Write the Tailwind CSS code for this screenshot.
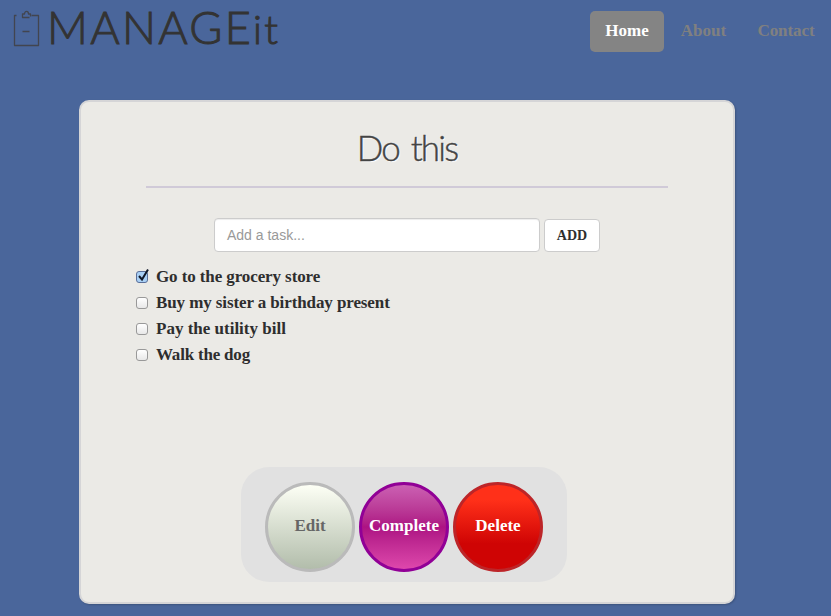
<!DOCTYPE html>
<html lang="en">
<head>
<meta charset="utf-8">
<title>MANAGEit</title>
<script src="https://cdn.jsdelivr.net/npm/@tailwindcss/browser@4"></script>
</head>
<body class="h-[616px] overflow-hidden bg-[#4a669b] font-['Liberation_Serif',serif] font-bold text-[#2e2e2e]">
<header class="flex h-[100px] items-start justify-between pl-[13px] pr-[2px]">
  <a class="flex text-[#333333]">
    <svg class="mt-[10px] h-[37px] w-[30px] shrink-0" viewBox="0 0 30 37" fill="none" stroke="#42454f" stroke-width="1.3" stroke-linejoin="round"><path d="M3.500 5.500H1.500V35.500H25.500V5.500H18.500"/><path d="M16.500 7.500H9.500V4H11.500C11.500 .6 15.500 .6 15.500 4H17.500V6.500M9.500 21.500H16.500"/></svg>
    <span class="ml-[4px] whitespace-nowrap font-['Lato',sans-serif] text-[45px] font-light leading-[54px] tracking-[2.3px] [-webkit-text-stroke:1px_#333]">MANAGE<span class="text-[40px]">it</span></span>
  </a>
  <nav class="mt-[11px] flex gap-[2px] text-[17px] leading-[40px] text-[#808080]">
    <a class="h-[41px] w-[74px] rounded-[5px] bg-[#848484] text-center text-white">Home</a>
    <a class="w-[75px] text-center">About</a>
    <a class="w-[86px] text-center tracking-[-0.1px]">Contact</a>
  </nav>
</header>
<main class="ml-[79px] h-[504px] w-[656px] rounded-[10px] border-2 border-[#d5d5d7] bg-[#ebeae6] shadow-[1px_1px_2px_#00000030]">
  <h1 class="mx-[65px] h-[86px] border-b-2 border-[#d0cad8] pt-[24px] text-center font-['Lato',sans-serif] text-[35px] font-light leading-[42px] tracking-[-1.8px] text-[#444] [-webkit-text-stroke:0.4px_#444] [text-shadow:1px_1px_1px_white] [word-spacing:4px]">Do this</h1>
  <form class="ml-[133px] mt-[30px] flex items-end gap-[4px]">
    <div class="h-[34px] w-[326px] rounded-[4px] border border-[#ccc] bg-white pl-[12px] font-['Liberation_Sans',sans-serif] text-[14px] font-normal leading-[33px] text-[#999] shadow-[inset_0_1px_1px_#00000013]">Add a task...</div>
    <button type="button" class="h-[33px] w-[56px] rounded-[4px] border border-[#ccc] bg-white text-[14px] leading-[31px]">ADD</button>
  </form>
  <ul class="ml-[55px] mt-[12px] h-[203px] text-[17px] leading-[26px] tracking-[-0.1px]">
    <li class="flex h-[26px] items-center gap-[6px]"><svg class="mt-[-2px] h-[16px] w-[14px] shrink-0" viewBox="0 0 14 16"><rect x=".5" y="3.500" width="11" height="11" rx="2.500" fill="#a9d0f5" stroke="#5a6f99"/><path d="M3 8L6 11.500L12 1.500" fill="none" stroke="#101828" stroke-width="2"/></svg><span>Go to the grocery store</span></li>
    <li class="flex h-[26px] items-center gap-[8px]"><i class="size-[12px] rounded-[3px] border border-[#999] bg-linear-to-b from-white to-[#e8e8e8]"></i><span>Buy my sister a birthday present</span></li>
    <li class="flex h-[26px] items-center gap-[8px]"><i class="size-[12px] rounded-[3px] border border-[#999] bg-linear-to-b from-white to-[#e8e8e8]"></i><span class="tracking-[0px]">Pay the utility bill</span></li>
    <li class="flex h-[26px] items-center gap-[8px]"><i class="size-[12px] rounded-[3px] border border-[#999] bg-linear-to-b from-white to-[#e8e8e8]"></i><span class="tracking-[-0.2px]">Walk the dog</span></li>
  </ul>
  <div class="ml-[160px] flex h-[115px] w-[326px] items-start gap-[4px] rounded-[28px] bg-[#e1e1e1] pl-[24px] pt-[15px] text-[17px]">
    <button class="size-[90px] rounded-full border-3 border-[#bababa] bg-linear-to-b from-[#fdfff5] to-[#b2bdab] pb-[2px] text-[#666]">Edit</button>
    <button class="size-[90px] rounded-full border-3 border-[#910096] bg-linear-to-b from-[#cb60b3] via-[#ad1283] to-[#de47ac] pb-[2px] text-white">Complete</button>
    <button class="size-[90px] rounded-full border-3 border-[#bd2528] bg-[linear-gradient(to_bottom,#ff3019_0%,#ff3019_18%,#cf0404_70%,#cf0404_100%)] pb-[2px] text-white">Delete</button>
  </div>
</main>
</body>
</html>
